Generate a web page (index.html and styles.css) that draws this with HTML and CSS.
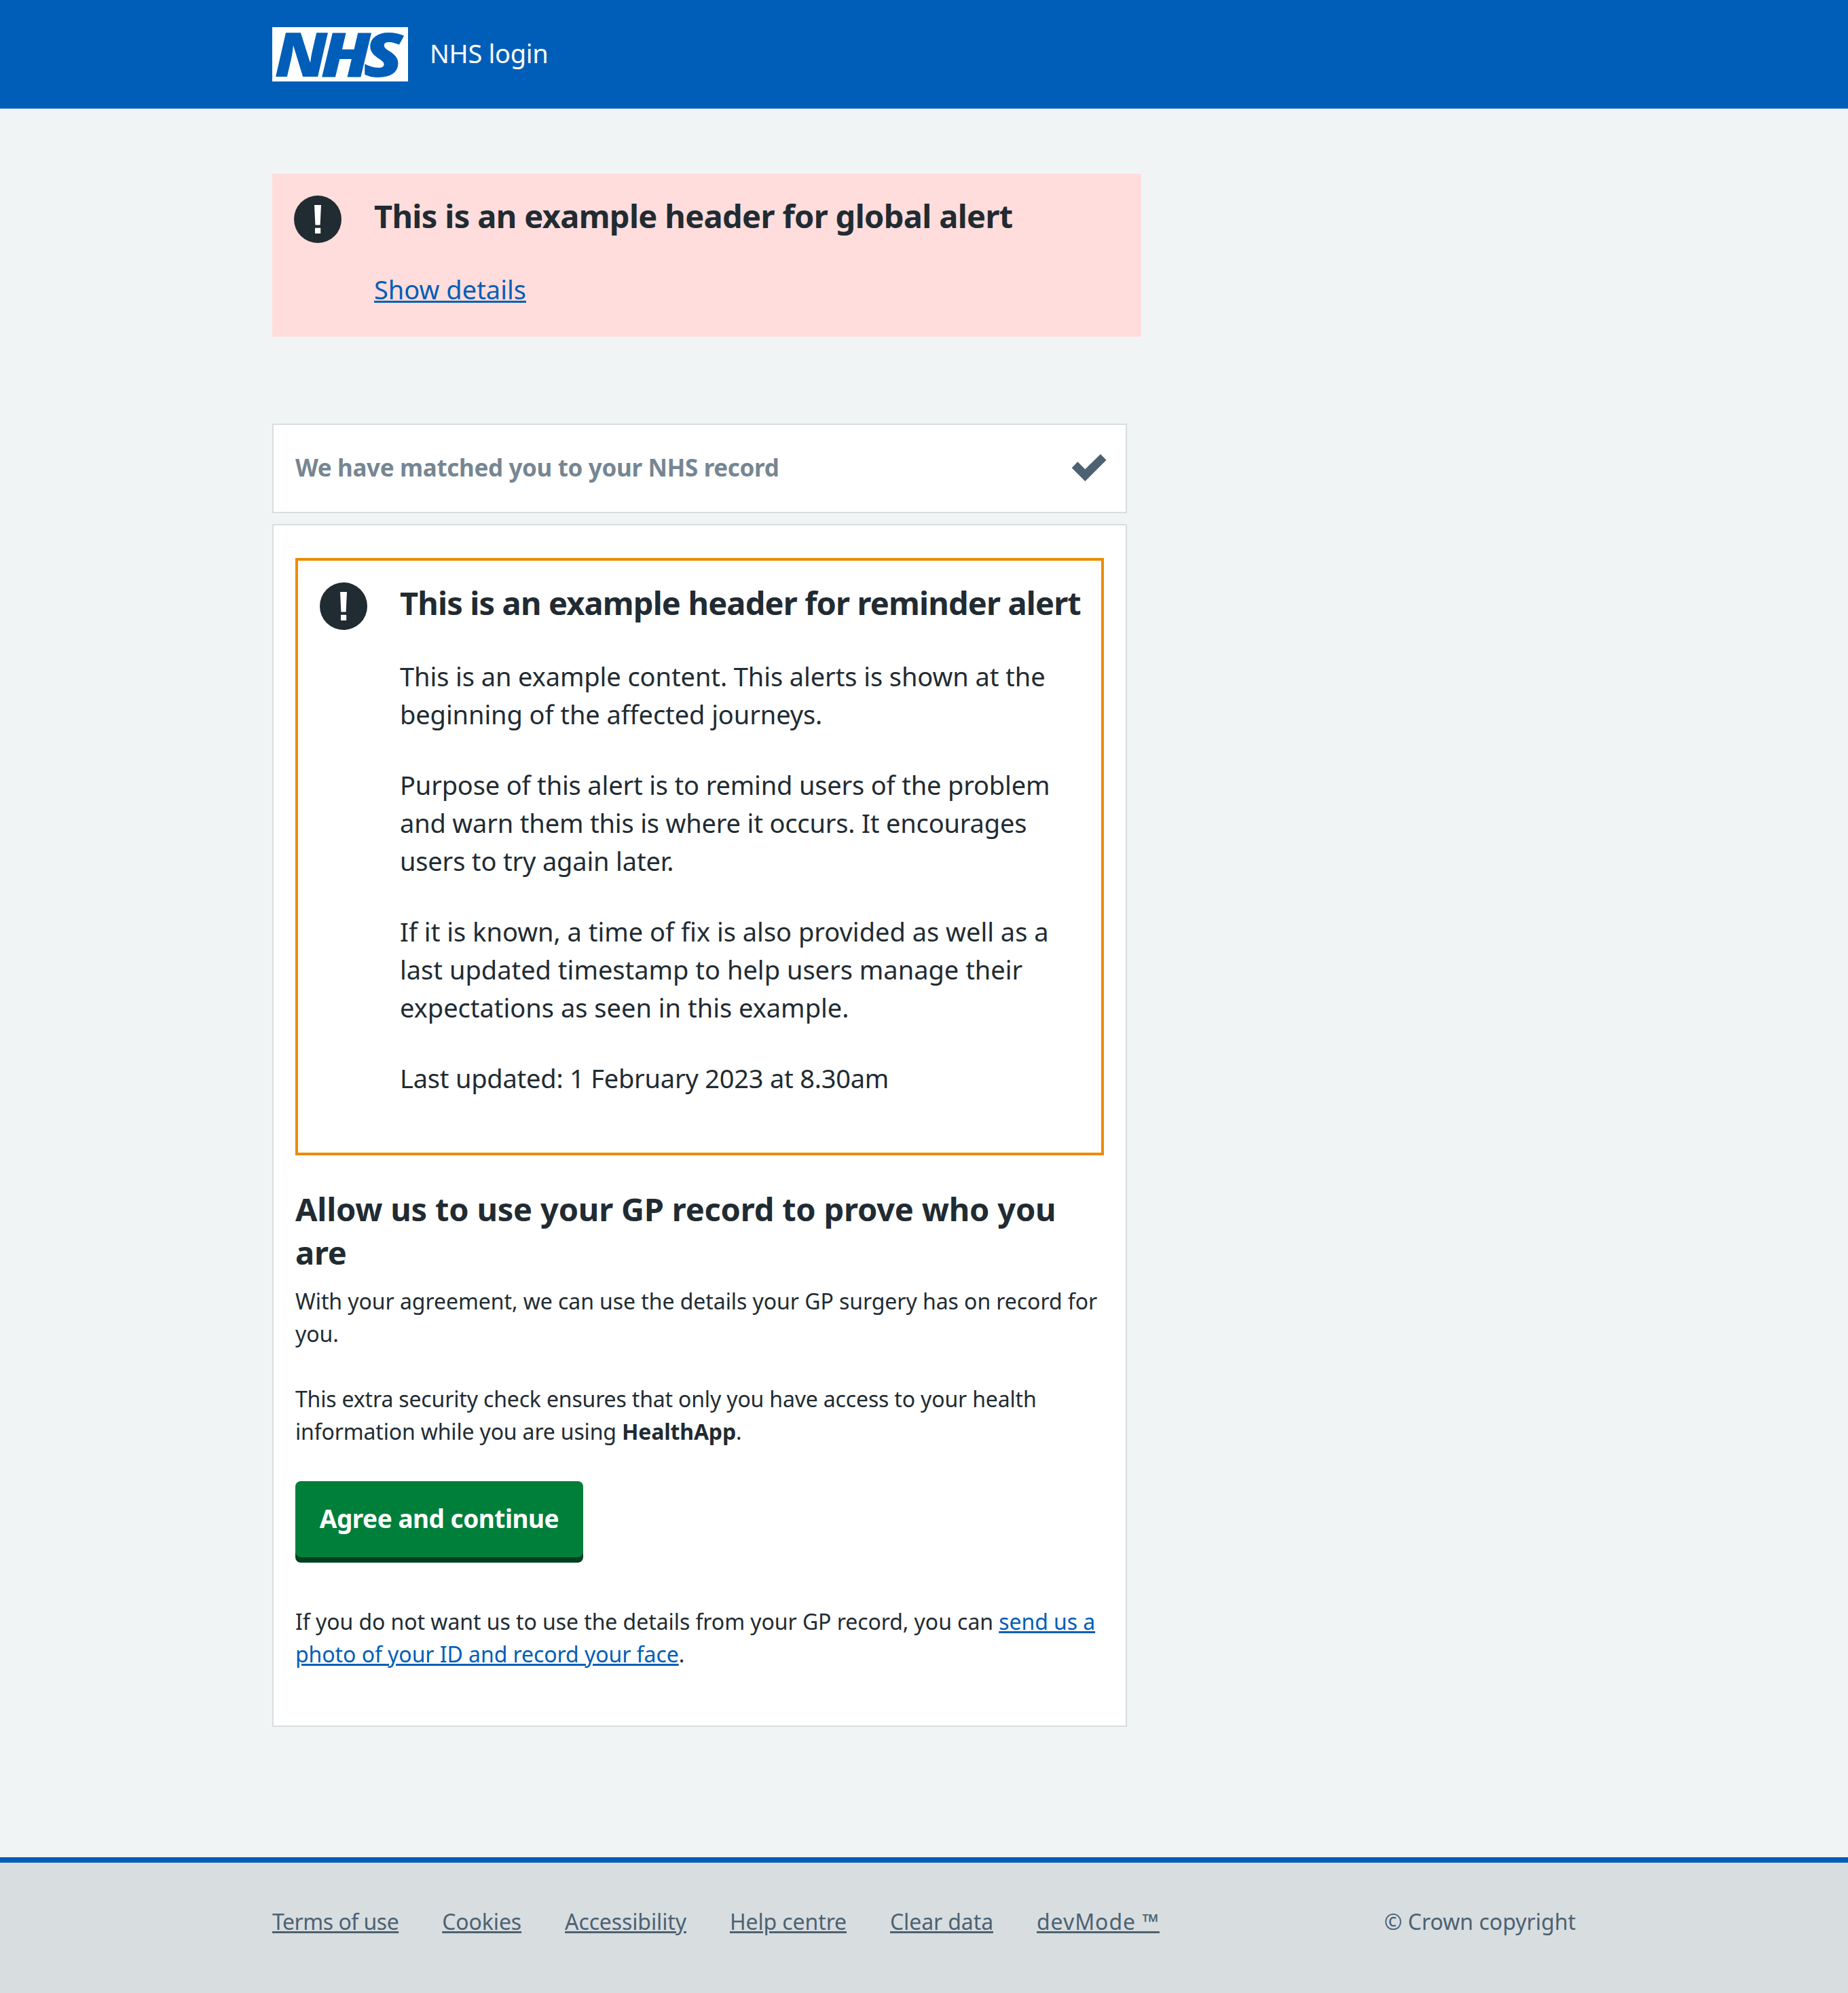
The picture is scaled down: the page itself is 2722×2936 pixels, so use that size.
FILE: index.html
```html
<!DOCTYPE html>
<html lang="en">
<head>
  <meta charset="utf-8">
  <title>NHS login</title>
  <link rel="stylesheet" href="styles.css">
</head>
<body>
  <svg class="symbols" aria-hidden="true">
    <symbol id="alert-icon" viewBox="0 0 70 70">
      <circle cx="35" cy="35" r="35" fill="#212b32"/>
      <path d="M30 14h10l-1.4 29.5h-7.2zM31 47.7h8.2v8.3h-8.2z" fill="#fff"/>
    </symbol>
  </svg>

  <header class="header">
    <div class="container header-row">
      <svg class="logo" viewBox="0 0 200 80" role="img" aria-label="NHS">
        <rect width="200" height="80" fill="#fff"/>
        <text class="logo-text" y="72.5">
          <tspan x="3.5" textLength="78" lengthAdjust="spacingAndGlyphs">N</tspan><tspan x="71.5" textLength="74" lengthAdjust="spacingAndGlyphs">H</tspan><tspan x="134" textLength="59" lengthAdjust="spacingAndGlyphs">S</tspan>
        </text>
      </svg>
      <span class="service-name">NHS login</span>
    </div>
  </header>

  <main class="container main">
    <section class="alert alert-global">
      <svg class="alert-icon"><use href="#alert-icon"/></svg>
      <div class="alert-body">
        <h2 class="heading">This is an example header for global alert</h2>
        <p class="show-details"><a class="link" href="#">Show details</a></p>
      </div>
    </section>

    <section class="card card-done">
      <h3 class="done-title">We have matched you to your NHS record</h3>
      <svg class="tick" viewBox="0 0 52 42"><path d="M0.7 21.2L9.3 12.3L20.3 23.2L43 1L51.5 9.7L20.3 41Z" fill="#4c6272"/></svg>
    </section>

    <section class="card card-current">
      <div class="alert alert-reminder">
        <svg class="alert-icon"><use href="#alert-icon"/></svg>
        <div class="alert-body">
          <h2 class="heading reminder-title">This is an example header for reminder alert</h2>
          <p class="intro">This is an example content. This alerts is shown at the beginning of the affected journeys.</p>
          <p class="tight">Purpose of this alert is to remind users of the problem and warn them this is where it occurs. It encourages users to try again later.</p>
          <p>If it is known, a time of fix is also provided as well as a last updated timestamp to help users manage their expectations as seen in this example.</p>
          <p class="updated">Last updated: 1 February 2023 at 8.30am</p>
        </div>
      </div>
      <h2 class="heading consent-title">Allow us to use your GP record to prove who you are</h2>
      <p class="text">With your agreement, we can use the details your GP surgery has on record for you.</p>
      <p class="text security">This extra security check ensures that only you have access to your health information while you are using <strong>HealthApp</strong>.</p>
      <button class="button" type="button">Agree and continue</button>
      <p class="text">If you do not want us to use the details from your GP record, you can <a class="link" href="#">send us a photo of your ID and record your face</a>.</p>
    </section>
  </main>

  <footer class="footer">
    <div class="container footer-row">
      <nav class="footer-links">
        <a class="link terms" href="#">Terms of use</a>
        <a class="link" href="#">Cookies</a>
        <a class="link" href="#">Accessibility</a>
        <a class="link" href="#">Help centre</a>
        <a class="link" href="#">Clear data</a>
        <a class="link devmode" href="#">devMode ™</a>
      </nav>
      <span class="copyright">© Crown copyright</span>
    </div>
  </footer>
</body>
</html>
```
FILE: styles.css
```css
* {
  box-sizing: border-box;
}

body {
  margin: 0;
  min-height: 2936px;
  display: flex;
  flex-direction: column;
  background: #f0f4f5;
  color: #212b32;
  font: 400 32px/48px "Noto Sans", "Open Sans", sans-serif;
}

h2, h3, p {
  margin: 0;
}

.symbols {
  display: none;
}

.container {
  width: 1920px;
  margin: 0 auto;
}

.link {
  color: #005eb8;
  text-decoration: underline;
  text-decoration-thickness: 3px;
  text-underline-offset: 2px;
}

/* Header */
.header {
  background: #005eb8;
}

.header-row {
  height: 160px;
  display: flex;
  align-items: center;
  gap: 32px;
}

.logo {
  width: 200px;
  height: 80px;
  overflow: visible;
}

.logo-text {
  fill: #005eb8;
  font: italic 800 91px "Open Sans", sans-serif;
}

.service-name {
  color: #fff;
  font-size: 38px;
  line-height: 56px;
  letter-spacing: -0.3px;
  padding-bottom: 5px;
}

/* Content */
.main {
  flex: 1;
  padding-top: 96px;
}

.heading {
  font-size: 47px;
  line-height: 64px;
  font-weight: 700;
  letter-spacing: -0.65px;
}

.alert {
  display: flex;
  gap: 48px;
  padding: 30px 32px 0;
  font-size: 38px;
  line-height: 56px;
}

.alert-icon {
  flex: none;
  width: 70px;
  height: 70px;
  margin-top: 2px;
}

.alert-body {
  display: flex;
  flex-direction: column;
  gap: 48px;
}

.alert-global {
  width: 1280px;
  height: 240px;
  margin-bottom: 128px;
  background: #ffdddc;
}

.alert-reminder {
  border: 4px solid #ed8b00;
  padding: 30px 32px 82px;
}

.reminder-title {
  letter-spacing: -0.85px;
  white-space: nowrap;
}

.intro {
  letter-spacing: -0.09px;
}

.tight {
  letter-spacing: -0.17px;
}

.updated {
  letter-spacing: -0.22px;
}

.card {
  width: 1259px;
  margin-bottom: 16px;
  padding: 0 32px;
  background: #fff;
  border: 2px solid #d8dde0;
}

.card-done {
  height: 132px;
  display: flex;
  align-items: center;
  justify-content: space-between;
  padding-right: 28px;
}

.done-title {
  color: #768692;
  font-size: 35px;
  font-weight: 700;
  letter-spacing: -0.35px;
  padding-bottom: 2px;
}

.tick {
  width: 52px;
  height: 42px;
  margin-bottom: 2px;
}

.card-current {
  margin-bottom: 0;
  padding: 48px 32px 81px;
}

.consent-title {
  margin: 47px 0 16px;
  letter-spacing: -0.2px;
}

.text {
  letter-spacing: -0.07px;
}

.security {
  margin: 48px 0 49px;
  letter-spacing: -0.17px;
}

.text strong {
  font-weight: 700;
}

.button {
  display: block;
  width: 424px;
  height: 112px;
  margin: 0 0 71px;
  padding: 0 0 3px;
  border: 0;
  border-radius: 8px;
  background: #007f3b;
  box-shadow: 0 8px 0 #00401e;
  color: #fff;
  font: 700 37px/56px "Noto Sans", "Open Sans", sans-serif;
  letter-spacing: -0.5px;
}

/* Footer */
.footer {
  height: 200px;
  padding-top: 63px;
  background: #d8dde0;
  border-top: 8px solid #005eb8;
  color: #4c6272;
}

.footer-row {
  display: flex;
  justify-content: space-between;
}

.footer-links {
  display: flex;
  gap: 64px;
}

.footer .link {
  color: #4c6272;
  letter-spacing: -0.12px;
}

.footer .terms {
  letter-spacing: -0.5px;
}

.footer .devmode {
  letter-spacing: 0.94px;
}
```
